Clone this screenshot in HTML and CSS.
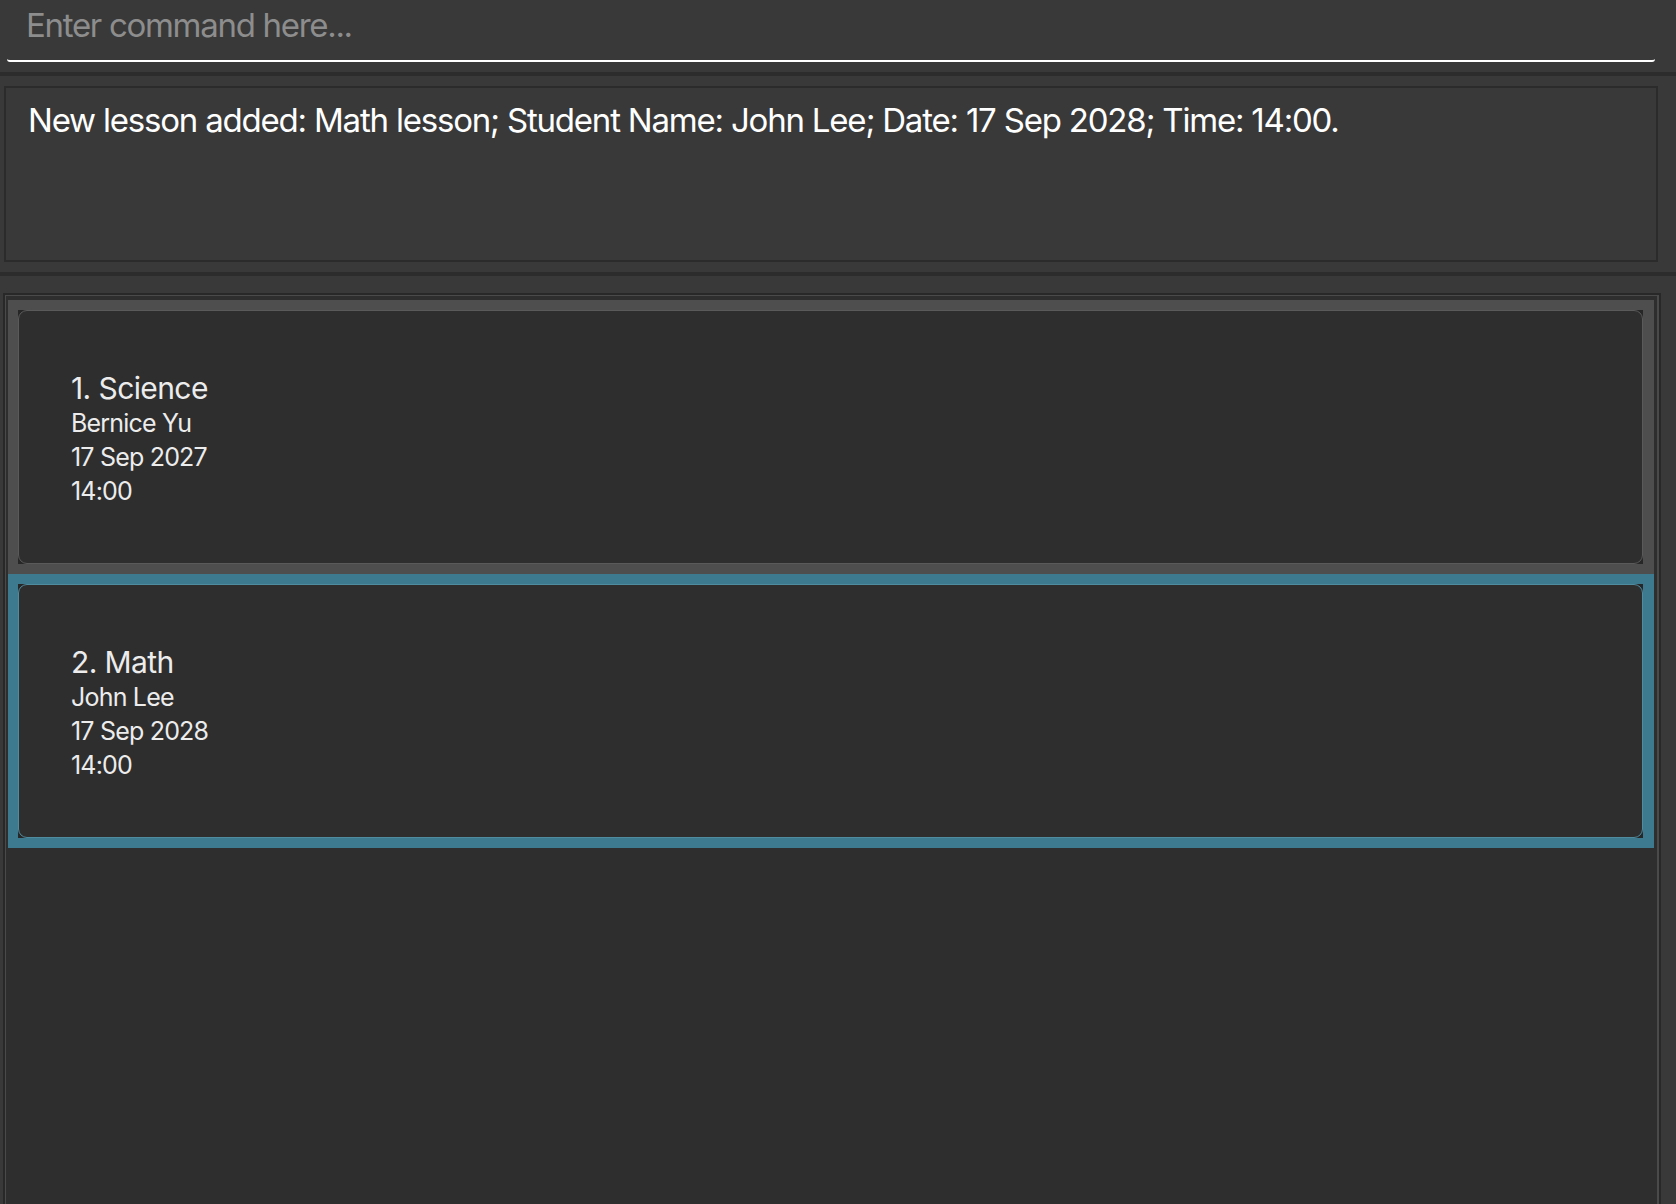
FILE: index.html
```html
<!DOCTYPE html>
<html lang="en">
<head>
<meta charset="utf-8">
<title>Lessons</title>
<link rel="stylesheet" href="styles.css">
</head>
<body>
<div class="app">
  <div class="command-pane">
    <div class="command-field"><span class="placeholder">Enter command here...</span></div>
  </div>
  <div class="divider"></div>
  <div class="result-pane">
    <div class="result-box">New lesson added: Math lesson; Student Name: John Lee; Date: 17 Sep 2028; Time: 14:00.</div>
  </div>
  <div class="divider"></div>
  <div class="list-pane">
    <div class="list">
      <div class="cell">
        <div class="card-frame">
          <div class="card">
            <div class="card-title">1. Science</div>
            <div class="card-line">Bernice Yu</div>
            <div class="card-line">17 Sep 2027</div>
            <div class="card-line">14:00</div>
          </div>
        </div>
      </div>
      <div class="cell selected">
        <div class="card-frame">
          <div class="card">
            <div class="card-title">2. Math</div>
            <div class="card-line">John Lee</div>
            <div class="card-line">17 Sep 2028</div>
            <div class="card-line">14:00</div>
          </div>
        </div>
      </div>
    </div>
  </div>
</div>
</body>
</html>
```

FILE: styles.css
```css
html, body {
  margin: 0;
  padding: 0;
  height: 100%;
}
body {
  background: #393939;
  font-family: Inter, "Noto Sans", "Liberation Sans", sans-serif;
  overflow: hidden;
}
.app {
  display: flex;
  flex-direction: column;
  height: 1204px;
}
.command-pane {
  height: 72px;
  padding: 0 21px 0 7px;
  box-sizing: border-box;
}
.command-field {
  height: 62px;
  box-sizing: border-box;
  border-bottom: 2px solid #ffffff;
  border-radius: 0 0 3px 3px;
  padding: 5px 0 0 19px;
}
.placeholder {
  font-size: 33px;
  line-height: 40px;
  color: #8d8d8d;
  letter-spacing: -1.3px;
}
.divider {
  height: 4px;
  background: #2c2c2c;
  flex: none;
}
.result-pane {
  height: 196px;
  box-sizing: border-box;
  padding: 10px 18px 10px 4px;
  flex: none;
}
.result-box {
  height: 100%;
  box-sizing: border-box;
  border: 2px solid #2b2b2b;
  padding: 12px 0 0 22px;
  color: #ffffff;
  font-size: 33px;
  line-height: 41px;
  letter-spacing: -1.2px;
}
.list-pane {
  flex: 1;
  padding: 17px 15px 0 3px;
  display: flex;
}
.list {
  flex: 1;
  background: #2e2e2e;
  border: 2px solid #282828;
  border-bottom: none;
  box-shadow: inset 1px 1px 0 #4a4a4a, inset -2px 0 0 #4a4a4a;
  padding: 5px 5px 0 3px;
}
.cell {
  height: 274px;
  box-sizing: border-box;
  padding: 10px 11px 10px 10px;
  background: #4e4e4e;
}
.cell.selected {
  background: #3e7a8f;
}
.card-frame {
  height: 100%;
  background: #272727;
}
.card {
  height: 100%;
  box-sizing: border-box;
  background: #2e2e2e;
  border: 1px solid #5a5a5a;
  border-radius: 9px;
  display: flex;
  flex-direction: column;
  justify-content: center;
  padding: 4px 0 0 52px;
  color: #ececec;
}
.cell.selected .card {
  border-color: #4f8ca0;
}
.card-title {
  font-size: 30px;
  line-height: 36px;
  letter-spacing: -0.6px;
}
.card-line {
  font-size: 25px;
  line-height: 34px;
  letter-spacing: -0.8px;
}
```
